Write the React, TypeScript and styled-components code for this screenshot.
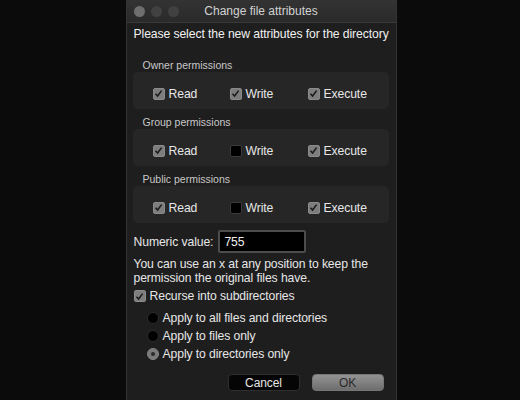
import styled, { createGlobalStyle } from "styled-components";

const Global = createGlobalStyle`
  body {
    margin: 0;
    background: #0b0b0b;
    font-family: "Liberation Sans", Arial, sans-serif;
  }
`;

const Page = styled.div`
  width: 520px;
  height: 400px;
  overflow: hidden;
  display: flex;
  justify-content: center;
  padding-left: 2px;
  box-sizing: border-box;
`;

const Window = styled.div`
  width: 269px;
  height: 400px;
  background: #1e1e1e;
  border-left: 1px solid #333;
  border-right: 1px solid #333;
  display: flex;
  flex-direction: column;
  color: #e6e6e6;
`;

const TitleBar = styled.div`
  height: 22px;
  flex-shrink: 0;
  display: grid;
  grid-template-columns: 60px 1fr 60px;
  align-items: center;
  background: linear-gradient(#333, #2a2a2a);
  border-bottom: 1px solid #3a3a3a;
`;

const Lights = styled.div`
  display: flex;
  gap: 6px;
  padding-left: 7px;
`;

const Light = styled.span<{ $on?: boolean }>`
  width: 11px;
  height: 11px;
  border-radius: 50%;
  background: ${p => (p.$on ? "#6e6e6e" : "#414141")};
`;

const Title = styled.div`
  text-align: center;
  font-size: 12px;
  color: #d2d2d2;
`;

const Body = styled.div`
  padding: 3px 7px 0 7px;
  display: flex;
  flex-direction: column;
  font-size: 12.2px;
  letter-spacing: -0.1px;
  white-space: nowrap;
`;

const Intro = styled.div`
  line-height: 16px;
  margin-bottom: 17px;
  color: #f0f0f0;
`;

const GroupLabel = styled.div`
  font-size: 10.5px;
  letter-spacing: 0;
  color: #c8c8c8;
  padding-left: 9px;
  line-height: 13px;
`;

const GroupBox = styled.div`
  height: 37px;
  margin: 0 0 7px -1px;
  border-radius: 5px;
  background: #262626;
  display: grid;
  grid-template-columns: 77px 78px 1fr;
  align-items: center;
  padding: 6px 0 0 20px;
  box-sizing: border-box;
`;

const Check = styled.label`
  display: flex;
  align-items: center;
  gap: 4px;
  color: #e6e6e6;
  line-height: 16px;
`;

const Box = styled.span<{ $checked: boolean }>`
  width: 12px;
  height: 12px;
  flex-shrink: 0;
  border-radius: 2px;
  box-sizing: border-box;
  background: ${p => (p.$checked ? "#7d7d7d" : "#000")};
  border: 1px solid ${p => (p.$checked ? "#8a8a8a" : "#3a3a3a")};
  display: flex;
  align-items: center;
  justify-content: center;
`;

const Row = styled.div`
  display: flex;
  align-items: center;
  gap: 5px;
  height: 23px;
`;

const NumInput = styled.div`
  width: 88px;
  height: 23px;
  box-sizing: border-box;
  background: #000;
  border: 2px solid #4c4c4c;
  border-radius: 2px;
  padding-left: 4px;
  display: flex;
  align-items: center;
  color: #f0f0f0;
`;

const Hint = styled.div`
  line-height: 14px;
  margin-top: 4px;
`;

const Recurse = styled(Check)`
  margin-top: 3px;
`;

const Radios = styled.div`
  display: flex;
  flex-direction: column;
  gap: 2px;
  padding-left: 13px;
  margin-top: 6px;
`;

const Radio = styled.span<{ $on: boolean }>`
  width: 12px;
  height: 12px;
  flex-shrink: 0;
  border-radius: 50%;
  box-sizing: border-box;
  background: ${p => (p.$on ? "#7a7a7a" : "#000")};
  border: 1px solid ${p => (p.$on ? "#858585" : "#2c2c2c")};
  display: flex;
  align-items: center;
  justify-content: center;
  &::after {
    content: "";
    width: 4px;
    height: 4px;
    border-radius: 50%;
    background: #2a2a2a;
    display: ${p => (p.$on ? "block" : "none")};
  }
`;

const Buttons = styled.div`
  display: flex;
  justify-content: flex-end;
  gap: 12px;
  padding-right: 5px;
  margin-top: 12px;
`;

const Button = styled.div<{ $primary?: boolean }>`
  width: 72px;
  height: 17px;
  border-radius: 4px;
  display: flex;
  align-items: center;
  justify-content: center;
  font-size: 12px;
  box-sizing: border-box;
  background: ${p => (p.$primary ? "linear-gradient(#939393, #6e6e6e)" : "#050505")};
  color: ${p => (p.$primary ? "#2a2a2a" : "#e6e6e6")};
  border: 1px solid ${p => (p.$primary ? "#777" : "#2e2e2e")};
`;

function Tick() {
  return (
    <svg width="9" height="9" viewBox="0 0 9 9">
      <path d="M1.5 4.8 L3.6 7 L7.6 1.6" fill="none" stroke="#1a1a1a" strokeWidth="1.5" />
    </svg>
  );
}

function CheckItem({ label, checked }: { label: string; checked: boolean }) {
  return (
    <Check>
      <Box $checked={checked}>{checked && <Tick />}</Box>
      {label}
    </Check>
  );
}

const groups = [
  { name: "Owner permissions", perms: [true, true, true] },
  { name: "Group permissions", perms: [true, false, true] },
  { name: "Public permissions", perms: [true, false, true] },
];

export default function App() {
  return (
    <Page>
      <Global />
      <Window>
        <TitleBar>
          <Lights>
            <Light $on />
            <Light />
            <Light />
          </Lights>
          <Title>Change file attributes</Title>
          <span />
        </TitleBar>
        <Body>
          <Intro>Please select the new attributes for the directory</Intro>
          {groups.map(g => (
            <div key={g.name}>
              <GroupLabel>{g.name}</GroupLabel>
              <GroupBox>
                <CheckItem label="Read" checked={g.perms[0]} />
                <CheckItem label="Write" checked={g.perms[1]} />
                <CheckItem label="Execute" checked={g.perms[2]} />
              </GroupBox>
            </div>
          ))}
          <Row>
            Numeric value:
            <NumInput>755</NumInput>
          </Row>
          <Hint>
            You can use an x at any position to keep the
            <br />
            permission the original files have.
          </Hint>
          <Recurse>
            <Box $checked>
              <Tick />
            </Box>
            Recurse into subdirectories
          </Recurse>
          <Radios>
            <Check>
              <Radio $on={false} />
              Apply to all files and directories
            </Check>
            <Check>
              <Radio $on={false} />
              Apply to files only
            </Check>
            <Check>
              <Radio $on />
              Apply to directories only
            </Check>
          </Radios>
          <Buttons>
            <Button>Cancel</Button>
            <Button $primary>OK</Button>
          </Buttons>
        </Body>
      </Window>
    </Page>
  );
}
